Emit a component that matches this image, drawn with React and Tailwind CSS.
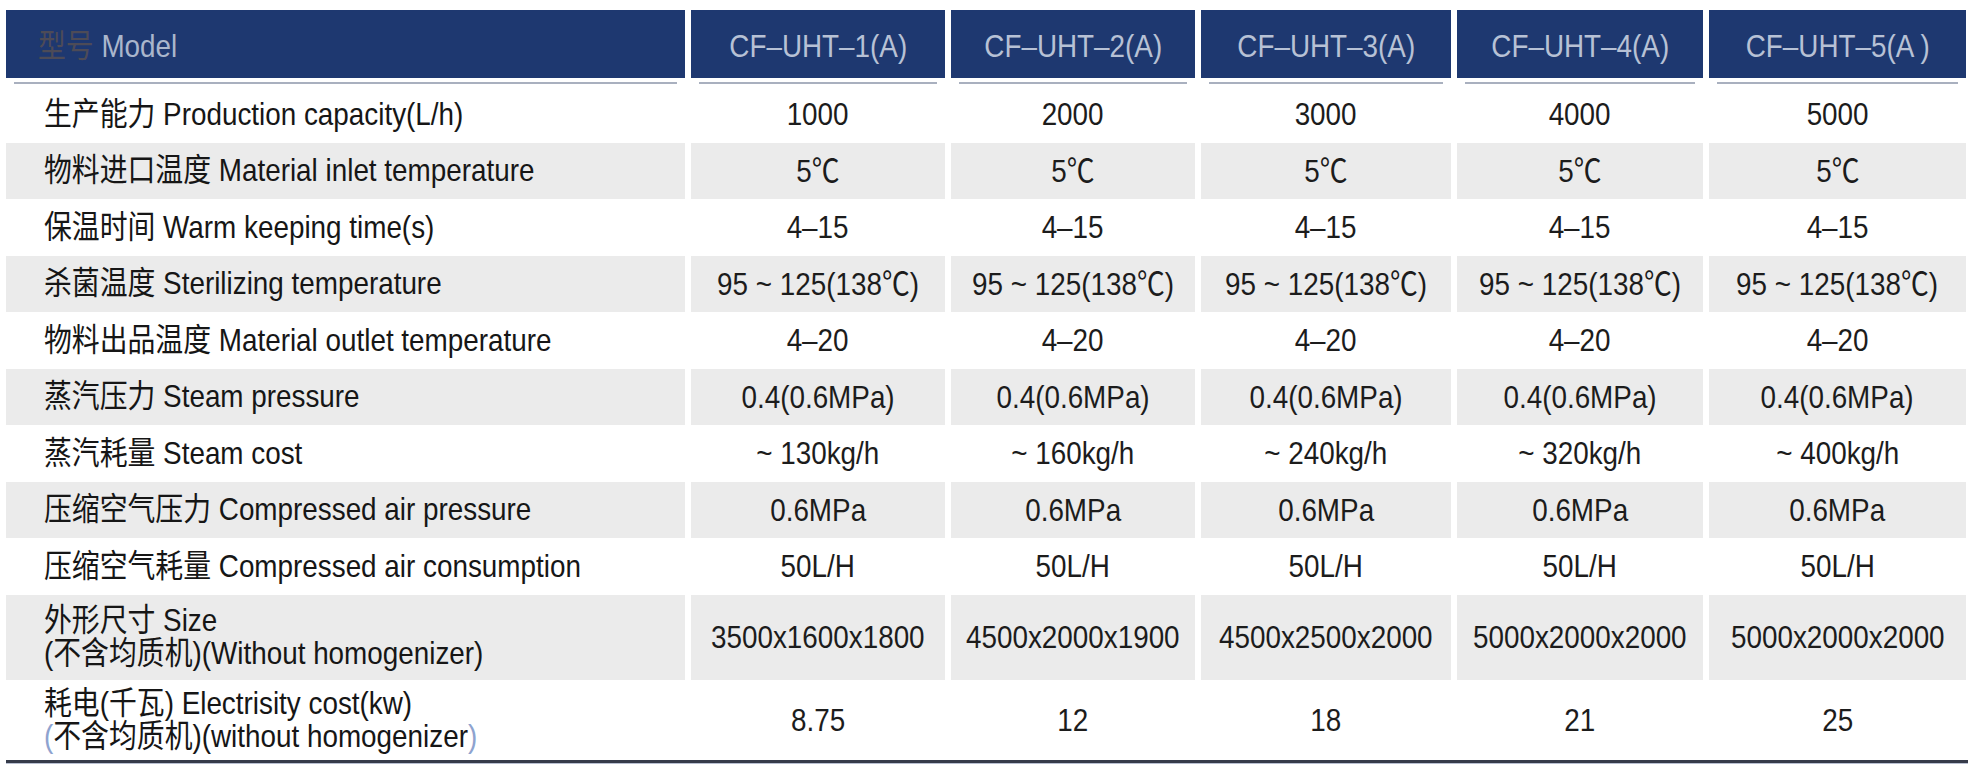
import React from "react";

const COLS = "grid grid-cols-[679px_254px_244px_250px_246px_257px] gap-x-[6px]";

const rows = [
  { label: "生产能力 Production capacity(L/h)", vals: ["1000", "2000", "3000", "4000", "5000"] },
  { label: "物料进口温度 Material inlet temperature", vals: ["5℃", "5℃", "5℃", "5℃", "5℃"] },
  { label: "保温时间 Warm keeping time(s)", vals: ["4–15", "4–15", "4–15", "4–15", "4–15"] },
  { label: "杀菌温度 Sterilizing temperature", vals: Array(5).fill("95 ~ 125(138℃)") },
  { label: "物料出品温度 Material outlet temperature", vals: Array(5).fill("4–20") },
  { label: "蒸汽压力 Steam pressure", vals: Array(5).fill("0.4(0.6MPa)") },
  { label: "蒸汽耗量 Steam cost", vals: ["~ 130kg/h", "~ 160kg/h", "~ 240kg/h", "~ 320kg/h", "~ 400kg/h"] },
  { label: "压缩空气压力 Compressed air pressure", vals: Array(5).fill("0.6MPa") },
  { label: "压缩空气耗量 Compressed air consumption", vals: Array(5).fill("50L/H") },
];

const headers = ["CF–UHT–1(A)", "CF–UHT–2(A)", "CF–UHT–3(A)", "CF–UHT–4(A)", "CF–UHT–5(A )"];

function Row({ gray, h, label, vals }) {
  const bg = gray ? "bg-[#ebebeb]" : "bg-white";
  return (
    <div className={`${COLS} ${h}`}>
      <div className={`${bg} flex flex-col justify-center pl-[38px] text-[#161616] leading-[33px]`}>
        <div className="inline-block origin-left scale-x-[0.87] whitespace-nowrap">{label}</div>
      </div>
      {vals.map((v, i) => (
        <div key={i} className={`${bg} flex items-center justify-center text-[#1c1c1c] whitespace-nowrap`}>
          <span className="inline-block scale-x-[0.87]">{v}</span>
        </div>
      ))}
    </div>
  );
}

export default function App() {
  return (
    <div
      className="min-h-[779px] w-[1978px] bg-white pt-[10px] pl-[6px] text-[32px]"
      style={{ fontFamily: '"Liberation Sans", "Noto Sans CJK SC", sans-serif' }}
    >
      {/* header */}
      <div className={`${COLS} h-[68px]`}>
        <div className="bg-[#1e3870] flex items-center pl-[32px] pt-[4px]">
          <span className="inline-block origin-left scale-x-[0.87] whitespace-nowrap">
            <span className="text-[#4d4b57]">型号</span>
            <span className="text-[#aab6cc]">&nbsp;Model</span>
          </span>
        </div>
        {headers.map((t) => (
          <div key={t} className="bg-[#1e3870] flex items-center justify-center text-[#b7c1d5] pt-[4px] whitespace-nowrap">
            <span className="inline-block scale-x-[0.87]">{t}</span>
          </div>
        ))}
      </div>
      <div className={`${COLS} h-[8px]`}>
        {[0, 1, 2, 3, 4, 5].map((i) => (
          <div key={i} className="pt-[4px] px-[8px]">
            <div className="h-[2px] bg-[#a9b0bf]"></div>
          </div>
        ))}
      </div>
      {rows.map((r, i) => (
        <Row key={i} gray={i % 2 === 1} h="h-[56.5px]" label={r.label} vals={r.vals} />
      ))}
      <Row
        gray
        h="h-[85px]"
        label={
          <>
            <div>外形尺寸 Size</div>
            <div>(不含均质机)(Without homogenizer)</div>
          </>
        }
        vals={["3500x1600x1800", "4500x2000x1900", "4500x2500x2000", "5000x2000x2000", "5000x2000x2000"]}
      />
      <Row
        h="h-[80px]"
        label={
          <>
            <div>耗电(千瓦) Electrisity cost(kw)</div>
            <div>
              <span className="text-[#8ea3cf]">(</span>不含均质机)(without homogenizer
              <span className="text-[#8ea3cf]">)</span>
            </div>
          </>
        }
        vals={["8.75", "12", "18", "21", "25"]}
      />
      <div className="w-[1962px] h-[3px] bg-[#363b4a]"></div>
      <div className="w-[1962px] h-[1px] bg-[#b9c0d2]"></div>
    </div>
  );
}
